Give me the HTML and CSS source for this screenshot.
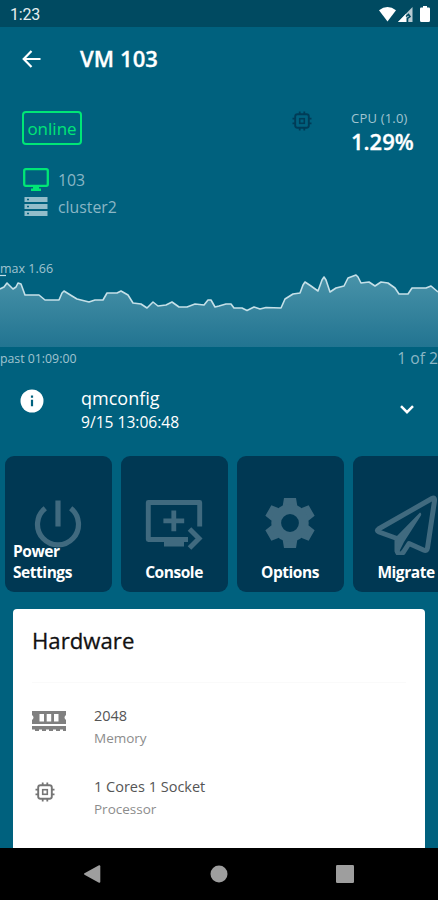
FILE: index.html
```html
<!DOCTYPE html>
<html lang="en">
<head>
    <meta charset="UTF-8">
    <meta name="viewport" content="width=device-width, initial-scale=1">
    <title>VM 103</title>
    <link rel="stylesheet" href="styles.css">
</head>
<body>
    <svg class="defs" width="0" height="0">
        <symbol id="icon-cpu" viewBox="0 0 20 20">
            <g fill="none" stroke="currentColor">
                <rect x="3.2" y="3.2" width="13.6" height="13.6" rx="2.2" stroke-width="1.9"/>
                <rect x="7.7" y="7.7" width="4.6" height="4.6" stroke-width="1.6"/>
                <path stroke-width="1.8" d="M7.7 0.5v3M12.3 0.5v3M7.7 16.5v3M12.3 16.5v3M0.5 7.7h3M0.5 12.3h3M16.5 7.7h3M16.5 12.3h3"/>
            </g>
        </symbol>
    </svg>

    <div class="screen">
        <!-- Status bar -->
        <div class="status-bar">
            <span class="clock">1:23</span>
            <div class="status-icons">
                <svg width="17" height="15" viewBox="0 0 17 15"><path fill="#fff" d="M0 3.2Q8.500-3 17 3.200L8.500 14.500Z"/></svg>
                <svg width="15" height="15" viewBox="0 0 15 15">
                    <path fill="#b8cbd2" d="M0 15L14.500 0V15Z"/>
                    <path fill="#fff" d="M0 15L8 6.700V15Z"/>
                    <path fill="none" stroke="#004a61" stroke-width="1.600" d="M8 9.500L10.500 7.500L12 9.500L9.500 11.500V15"/>
                </svg>
                <svg class="battery" width="10" height="16" viewBox="0 0 10 16"><path fill="#fff" d="M3 0h4v1.500h1.700q1.300 0 1.300 1.300V14.500q0 1.500-1.500 1.500h-7Q0 16 0 14.500V2.800Q0 1.500 1.300 1.500H3Z"/></svg>
            </div>
        </div>

        <!-- App bar -->
        <header class="app-bar">
            <svg width="19" height="18" viewBox="0 0 19 18"><path fill="none" stroke="#fff" stroke-width="2.2" d="M18.500 9H2M9.500 1L1.700 9L9.500 17"/></svg>
            <h1>VM 103</h1>
        </header>

        <!-- VM state -->
        <section class="summary">
            <div class="state">
                <span class="badge">online</span>
                <div class="state-row">
                    <svg width="26" height="24" viewBox="0 0 26 24">
                        <rect x="1.200" y="1.200" width="23.600" height="16.600" rx="1.500" fill="none" stroke="#00e676" stroke-width="2.300"/>
                        <path fill="#00e676" d="M10 18h6v2.500h2V23H8v-2.500h2Z"/>
                    </svg>
                    <span>103</span>
                </div>
                <div class="state-row">
                    <svg width="26" height="20" viewBox="0 0 26 20">
                        <path fill="#92bdca" d="M1.500 0H24.500v5H1.500ZM1.500 7H24.500v5H1.500ZM1.500 14H24.500v5H1.500Z"/>
                        <path fill="#00617e" d="M4 1.700h2v1.600H4ZM4 8.700h2v1.600H4ZM4 15.700h2v1.600H4Z"/>
                    </svg>
                    <span>cluster2</span>
                </div>
            </div>
            <svg class="cpu-icon" width="20" height="20"><use href="#icon-cpu"/></svg>
            <div class="cpu">
                <span class="cpu-label">CPU (1.0)</span>
                <strong>1.29%</strong>
            </div>
        </section>

        <!-- CPU history -->
        <section class="chart">
            <p class="chart-max">max 1.66</p>
            <svg width="438" height="73" viewBox="0 274 438 73">
                <defs>
                    <linearGradient id="fill" gradientUnits="userSpaceOnUse" x1="0" y1="274" x2="0" y2="347">
                        <stop offset="0" stop-color="#4993a9"/>
                        <stop offset="1" stop-color="#227491"/>
                    </linearGradient>
                </defs>
                <path fill="url(#fill)" d="M0 289L4 287L7 283L9 285L13 289L16 287L18 283L21 284L25 295H39L45 300H59L62 293L64 291L72 296L77 299L89 302L95 300H103L107 293H117L121 291L128 295L133 303L141 304L147 308L150 305L153 302L158 306L166 305L172 302L179 307H187L195 304L204 305L208 300H211L215 307L219 306L226 304H231L234 308H242L247 310.500L254 307L260 309L266 307.500L281 308L285 299L293 294L300 293L303 285L305 282L311 286L318 291L322 280L324 277L326 280L330 292L336 288L344 286L348 278L356 275L358 277L361 283L369 282L375 286L381 282L388 283L395 288L399 294H408L412 288L426 288L431 286L438 292V347H0Z"/>
                <path fill="none" stroke="#c5e0e8" stroke-width="1.600" stroke-linejoin="round" d="M0 289L4 287L7 283L9 285L13 289L16 287L18 283L21 284L25 295H39L45 300H59L62 293L64 291L72 296L77 299L89 302L95 300H103L107 293H117L121 291L128 295L133 303L141 304L147 308L150 305L153 302L158 306L166 305L172 302L179 307H187L195 304L204 305L208 300H211L215 307L219 306L226 304H231L234 308H242L247 310.500L254 307L260 309L266 307.500L281 308L285 299L293 294L300 293L303 285L305 282L311 286L318 291L322 280L324 277L326 280L330 292L336 288L344 286L348 278L356 275L358 277L361 283L369 282L375 286L381 282L388 283L395 288L399 294H408L412 288L426 288L431 286L438 292"/>
                <path stroke="#c5e0e8" stroke-width="1.200" d="M0 275.500H6"/>
            </svg>
            <div class="chart-footer">
                <span>past 01:09:00</span>
                <span class="pages">1 of 2</span>
            </div>
        </section>

        <!-- Last task -->
        <section class="task">
            <svg class="task-info" width="24" height="24" viewBox="0 0 24 24">
                <circle cx="12" cy="12" r="11.500" fill="#fff"/>
                <path fill="#00617e" d="M10.900 6.500h2.200v2.200h-2.200ZM10.900 10.700h2.200v6.500h-2.200Z"/>
            </svg>
            <div class="task-text">
                <p class="task-name">qmconfig</p>
                <p class="task-date">9/15 13:06:48</p>
            </div>
            <svg class="task-arrow" width="14" height="9" viewBox="0 0 14 9"><path fill="none" stroke="#fff" stroke-width="2.500" d="M1 1.200L7 7.200L13 1.200"/></svg>
        </section>

        <!-- Actions -->
        <section class="actions">
            <div class="action">
                <svg width="64" height="64" viewBox="0 0 64 64">
                    <path fill="none" stroke="#406a7f" stroke-width="5.200" d="M32 9.500V35.500M19.300 17.300A20.500 20.500 0 1 0 44.700 17.300"/>
                </svg>
                <span>Power Settings</span>
            </div>
            <div class="action">
                <svg width="64" height="64" viewBox="0 0 64 64">
                    <path fill="none" stroke="#406a7f" stroke-width="4.900" stroke-linejoin="round" d="M46 48.500H6.300V11.500H57.700V35.500"/>
                    <path fill="#406a7f" d="M22 47h20v8.500H22ZM29.400 19.500h4.800v8h8v4.800h-8v8h-4.800v-8h-8v-4.800h8Z"/>
                    <path fill="none" stroke="#406a7f" stroke-width="5" d="M47.500 38L57 47.500L47.500 57"/>
                </svg>
                <span>Console</span>
            </div>
            <div class="action">
                <svg width="64" height="64" viewBox="0 0 64 64">
                    <!-- six teeth around a ring -->
                    <g fill="#406a7f">
                        <path d="M26 7H38L39.300 15H24.700ZM26 57H38L39.300 49H24.700Z"/>
                        <path d="M26 7H38L39.300 15H24.700ZM26 57H38L39.300 49H24.700Z" transform="rotate(60 32 32)"/>
                        <path d="M26 7H38L39.300 15H24.700ZM26 57H38L39.300 49H24.700Z" transform="rotate(120 32 32)"/>
                    </g>
                    <circle cx="32" cy="32" r="13.800" fill="none" stroke="#406a7f" stroke-width="9.800"/>
                </svg>
                <span>Options</span>
            </div>
            <div class="action">
                <svg width="64" height="64" viewBox="0 0 64 64">
                    <path fill="none" stroke="#406a7f" stroke-width="5" stroke-linejoin="round" d="M4.500 38L58 7.500Q61 6 60.500 10L53.500 57Q53 60.500 49.500 59L35 52.500L29.500 61Q25 66 23 60V47.500L5 41Q2 39.700 4.500 38Z"/>
                    <path fill="#406a7f" d="M46 21.500Q48.500 22.500 46 26L30 51L25 61L21 47Z"/>
                </svg>
                <span>Migrate</span>
            </div>
        </section>

        <!-- Hardware -->
        <section class="card">
            <h2>Hardware</h2>
            <div class="hw-row">
                <div class="hw-icon">
                    <svg width="34" height="21" viewBox="0 0 34 21">
                        <path fill="#808080" fill-rule="evenodd" d="M0 0H34V4Q31 6.500 34 9V13H0V9Q3 6.500 0 4ZM7.500 3v7.500h4.500V3ZM14.700 3v7.500h4.500V3ZM22 3v7.500h4.500V3Z"/>
                        <path fill="#808080" d="M0 15H34V20H31V18.500H28V20H24V18.500H21V20H17V18.500H14V20H10V18.500H7V20H3V18.500H0Z"/>
                    </svg>
                </div>
                <div>
                    <p class="hw-value">2048</p>
                    <p class="hw-label">Memory</p>
                </div>
            </div>
            <div class="hw-row">
                <div class="hw-icon">
                    <svg class="hw-cpu" width="20" height="20"><use href="#icon-cpu"/></svg>
                </div>
                <div>
                    <p class="hw-value">1 Cores 1 Socket</p>
                    <p class="hw-label">Processor</p>
                </div>
            </div>
        </section>

        <!-- System navigation -->
        <nav class="nav-bar">
            <svg width="18" height="18" viewBox="0 0 18 18"><path fill="#9e9e9e" d="M0.500 8.300L15 0.300Q16.300 0 16.300 1.300V16.700Q16.300 18 15 17.700L0.500 9.700Q-0.500 9 0.500 8.300Z"/></svg>
            <svg width="18" height="18" viewBox="0 0 18 18"><circle cx="9" cy="9" r="8.500" fill="#9e9e9e"/></svg>
            <svg width="18" height="18" viewBox="0 0 18 18"><rect width="18" height="18" rx="1.200" fill="#9e9e9e"/></svg>
        </nav>
    </div>
</body>
</html>
```

FILE: styles.css
```css
:root {
    --primary-color: #00617e;
    --status-color: #004a61;
    --tile-color: #003853;
    --muted-color: #8ab6c5;
    --online-color: #00e676;
}

* {
    margin: 0;
    padding: 0;
    box-sizing: border-box;
}

body {
    background: var(--primary-color);
    font-family: 'Open Sans', 'Noto Sans', sans-serif;
    color: white;
    overflow: hidden;
}

svg {
    display: block;
    flex-shrink: 0;
}

.defs {
    position: absolute;
}

.screen {
    width: 438px;
    height: 900px;
    display: flex;
    flex-direction: column;
    overflow: hidden;
}

.status-bar {
    height: 27px;
    flex-shrink: 0;
    display: flex;
    align-items: center;
    justify-content: space-between;
    padding: 1px 8px 0 10px;
    background: var(--status-color);
}

.clock {
    font-family: Roboto, sans-serif;
    font-size: 16px;
    letter-spacing: -0.2px;
    color: #e6eef0;
}

.status-icons {
    display: flex;
    align-items: center;
    gap: 2px;
}

.battery {
    margin-left: 5px;
}

.app-bar {
    height: 64px;
    flex-shrink: 0;
    display: flex;
    align-items: center;
    gap: 39px;
    padding-left: 22px;
}

.app-bar h1 {
    padding-bottom: 2px;
    font-size: 22px;
    font-weight: 600;
    letter-spacing: 0.1px;
    -webkit-text-stroke: 0.3px white;
}

.summary {
    height: 168px;
    flex-shrink: 0;
    display: flex;
    padding: 20px 24px 0 22px;
}

.state {
    flex: 1;
}

.badge {
    display: block;
    width: 60px;
    height: 34px;
    margin-bottom: 21px;
    border: 2px solid var(--online-color);
    border-radius: 4px;
    font-size: 17px;
    line-height: 31px;
    text-align: center;
    color: var(--online-color);
}

.state-row {
    height: 27px;
    display: flex;
    align-items: center;
    gap: 9px;
    padding-left: 1px;
    font-size: 15.8px;
    color: var(--muted-color);
}

.cpu-icon {
    margin-right: 39px;
    color: #003c57;
}

.cpu {
    display: flex;
    flex-direction: column;
    align-items: flex-start;
    width: 63px;
}

.cpu-label {
    font-size: 13px;
    line-height: 15px;
    letter-spacing: 0.2px;
    white-space: nowrap;
    color: #a0c4d0;
}

.cpu strong {
    font-size: 22px;
    font-weight: 600;
    line-height: 31px;
    -webkit-text-stroke: 0.3px white;
}

.chart {
    height: 121px;
    flex-shrink: 0;
}

.chart-max {
    height: 15px;
    font-size: 12.5px;
    line-height: 19px;
    color: #a0c4d0;
}

.chart-footer {
    display: flex;
    justify-content: space-between;
    font-size: 12.3px;
    line-height: 23px;
    color: #a0c4d0;
}

.pages {
    font-size: 15.7px;
    color: var(--muted-color);
}

.task {
    height: 76px;
    flex-shrink: 0;
    display: flex;
    padding: 7px 24px 0 20px;
}

.task-info {
    margin-top: 2px;
}

.task-text {
    flex: 1;
    padding-left: 37px;
}

.task-name {
    font-size: 18px;
    line-height: 22px;
}

.task-date {
    font-size: 15.6px;
    line-height: 26px;
}

.task-arrow {
    margin-top: 18px;
}

.actions {
    flex-shrink: 0;
    display: flex;
    gap: 9px;
    padding-left: 5px;
}

.action {
    width: 107px;
    height: 136px;
    flex-shrink: 0;
    display: grid;
    padding: 0 9px 9px 8px;
    border-radius: 9px;
    background: var(--tile-color);
}

.action svg,
.action span {
    grid-area: 1 / 1;
}

.action svg {
    justify-self: center;
    margin-top: 35px;
}

.action span {
    align-self: end;
    justify-self: center;
    font-size: 15.5px;
    font-weight: 700;
    line-height: 21px;
    letter-spacing: -0.45px;
}

.card {
    flex: 1;
    min-height: 0;
    margin: 17px 13px 0;
    padding: 16px 19px 0 19px;
    border-radius: 4px 4px 0 0;
    background: white;
    overflow: hidden;
}

.card h2 {
    height: 58px;
    border-bottom: 1px solid #fafafa;
    font-size: 22.2px;
    font-weight: 500;
    line-height: 31px;
    color: #111;
    -webkit-text-stroke: 0.3px #111;
}

.hw-row {
    height: 71px;
    display: flex;
    padding-top: 22px;
}

.hw-icon {
    width: 62px;
    padding-top: 6px;
}

.hw-cpu {
    margin-left: 3px;
    color: #757575;
}

.hw-value {
    font-size: 14.5px;
    line-height: 21px;
    color: #555;
}

.hw-label {
    font-size: 13.5px;
    line-height: 25px;
    color: #8c8c8c;
}

.nav-bar {
    height: 52px;
    flex-shrink: 0;
    display: flex;
    align-items: center;
    justify-content: space-between;
    padding: 0 84px;
    background: black;
}
```
